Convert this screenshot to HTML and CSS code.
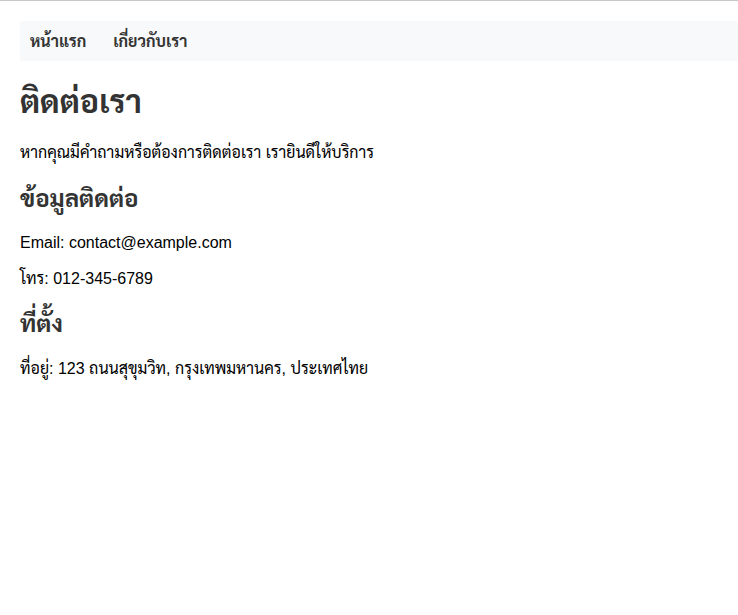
FILE: index.html
```html
<!DOCTYPE html>
<html lang="th">
<head>
<meta charset="utf-8">
<title>ติดต่อเรา</title>
<link rel="stylesheet" href="styles.css">
</head>
<body>
<div class="topline"></div>
<div class="page">
  <nav class="nav">
    <a href="#" class="nav-link">หน้าแรก</a>
    <a href="#" class="nav-link">เกี่ยวกับเรา</a>
  </nav>
  <main class="content">
    <h1 class="title">ติดต่อเรา</h1>
    <p class="text">หากคุณมีคำถามหรือต้องการติดต่อเรา เรายินดีให้บริการ</p>
    <h2 class="subtitle">ข้อมูลติดต่อ</h2>
    <p class="text">Email: contact@example.com</p>
    <p class="text">โทร: 012-345-6789</p>
    <h2 class="subtitle">ที่ตั้ง</h2>
    <p class="text">ที่อยู่: 123 ถนนสุขุมวิท, กรุงเทพมหานคร, ประเทศไทย</p>
  </main>
</div>
</body>
</html>
```
FILE: styles.css
```css
html, body {
  margin: 0;
  padding: 0;
  background: #fff;
}
body {
  font-family: "Liberation Sans", "Sarabun", sans-serif;
  color: #000;
  overflow: hidden;
}
.topline {
  height: 1px;
  background: #c8c8c8;
}
.page {
  padding: 20px 0 0 20px;
}
.nav {
  background: #f8f9fa;
  padding: 10px;
  height: 20px;
  display: flex;
  align-items: center;
  gap: 27px;
}
.nav-link {
  color: #333;
  font-weight: bold;
  font-size: 16px;
  line-height: 1.117;
  padding-top: 0.095em;
  text-decoration: none;
}
.content {
  padding-right: 20px;
}
.title,
.subtitle,
.text {
  line-height: 1.117;
  padding-top: 0.095em;
}
.title {
  color: #333;
  font-size: 32px;
  margin: 0.67em 0;
}
.subtitle {
  color: #333;
  font-size: 24px;
  margin: 0.83em 0;
  padding-top: 4px;
}
.text {
  font-size: 16px;
  margin: 1em 0;
}
```
